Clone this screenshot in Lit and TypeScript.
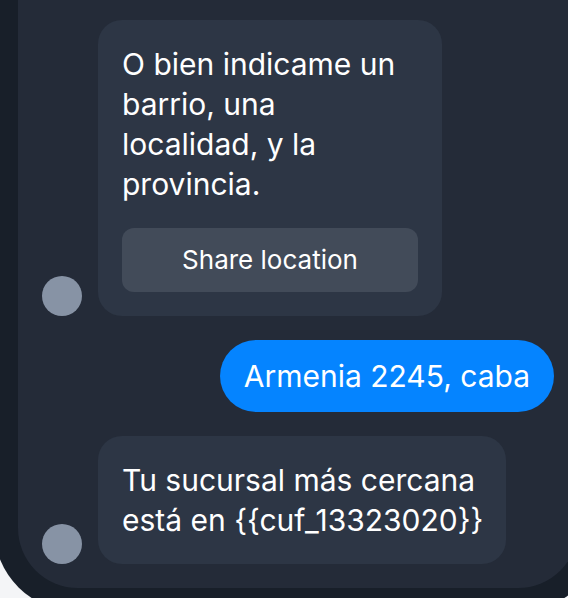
import { LitElement, html, css, nothing } from "lit";
import { customElement, property } from "lit/decorators.js";
import { classMap } from "lit/directives/class-map.js";

interface Message {
  text: string;
  own?: boolean;
  narrow?: boolean;
  action?: string;
}

const MESSAGES: Message[] = [
  {
    text: "O bien indicame un barrio, una localidad, y la provincia.",
    narrow: true,
    action: "Share location",
  },
  { text: "Armenia 2245, caba", own: true },
  { text: "Tu sucursal más cercana está en {{cuf_13323020}}" },
];

@customElement("chat-message")
export class ChatMessage extends LitElement {
  @property({ attribute: false }) message!: Message;

  static styles = css`
    :host {
      display: block;
    }
    .row {
      display: flex;
      align-items: flex-end;
      gap: 16px;
    }
    .row.own {
      justify-content: flex-end;
    }
    .avatar {
      flex: none;
      width: 40px;
      height: 40px;
      border-radius: 50%;
      background: #8793a5;
    }
    .bubble {
      box-sizing: border-box;
      max-width: 408px;
      padding: 24px 20px 24px 24px;
      border-radius: 24px;
      background: #2d3645;
    }
    .narrow .bubble {
      max-width: 344px;
      padding: 24px;
    }
    .own .bubble {
      padding: 16px 24px;
      border-radius: 36px;
      background: #0584ff;
    }
    p {
      margin: 0;
    }
    button {
      display: block;
      width: 100%;
      height: 64px;
      margin-top: 24px;
      padding: 0 16px;
      border: 0;
      border-radius: 12px;
      background: #424b59;
      color: inherit;
      font: inherit;
      font-size: 26px;
      cursor: pointer;
    }
  `;

  render() {
    const { text, own = false, narrow = false, action } = this.message;
    return html`
      <div class=${classMap({ row: true, own, narrow })}>
        ${own ? nothing : html`<span class="avatar"></span>`}
        <div class="bubble">
          <p>${text}</p>
          ${action ? html`<button type="button">${action}</button>` : nothing}
        </div>
      </div>
    `;
  }
}

@customElement("app-root")
export class AppRoot extends LitElement {
  static styles = css`
    :host {
      display: block;
      min-height: 100vh;
      max-height: 100vh;
      overflow: hidden;
      background: #f4f5f7;
      color: #fff;
      font-family: Inter, "Liberation Sans", sans-serif;
      font-size: 30px;
      font-weight: 370;
      line-height: 40px;
    }
    .phone {
      margin: 0 -34px 0 -6px;
      padding: 0 24px 24px;
      border-radius: 0 0 84px 84px;
      background: #181f29;
    }
    .screen {
      display: flex;
      flex-direction: column;
      gap: 24px;
      padding: 20px 24px 24px;
      border-radius: 0 0 60px 60px;
      background: #242b38;
    }
  `;

  render() {
    return html`
      <div class="phone">
        <main class="screen">
          ${MESSAGES.map((m) => html`<chat-message .message=${m}></chat-message>`)}
        </main>
      </div>
    `;
  }
}
